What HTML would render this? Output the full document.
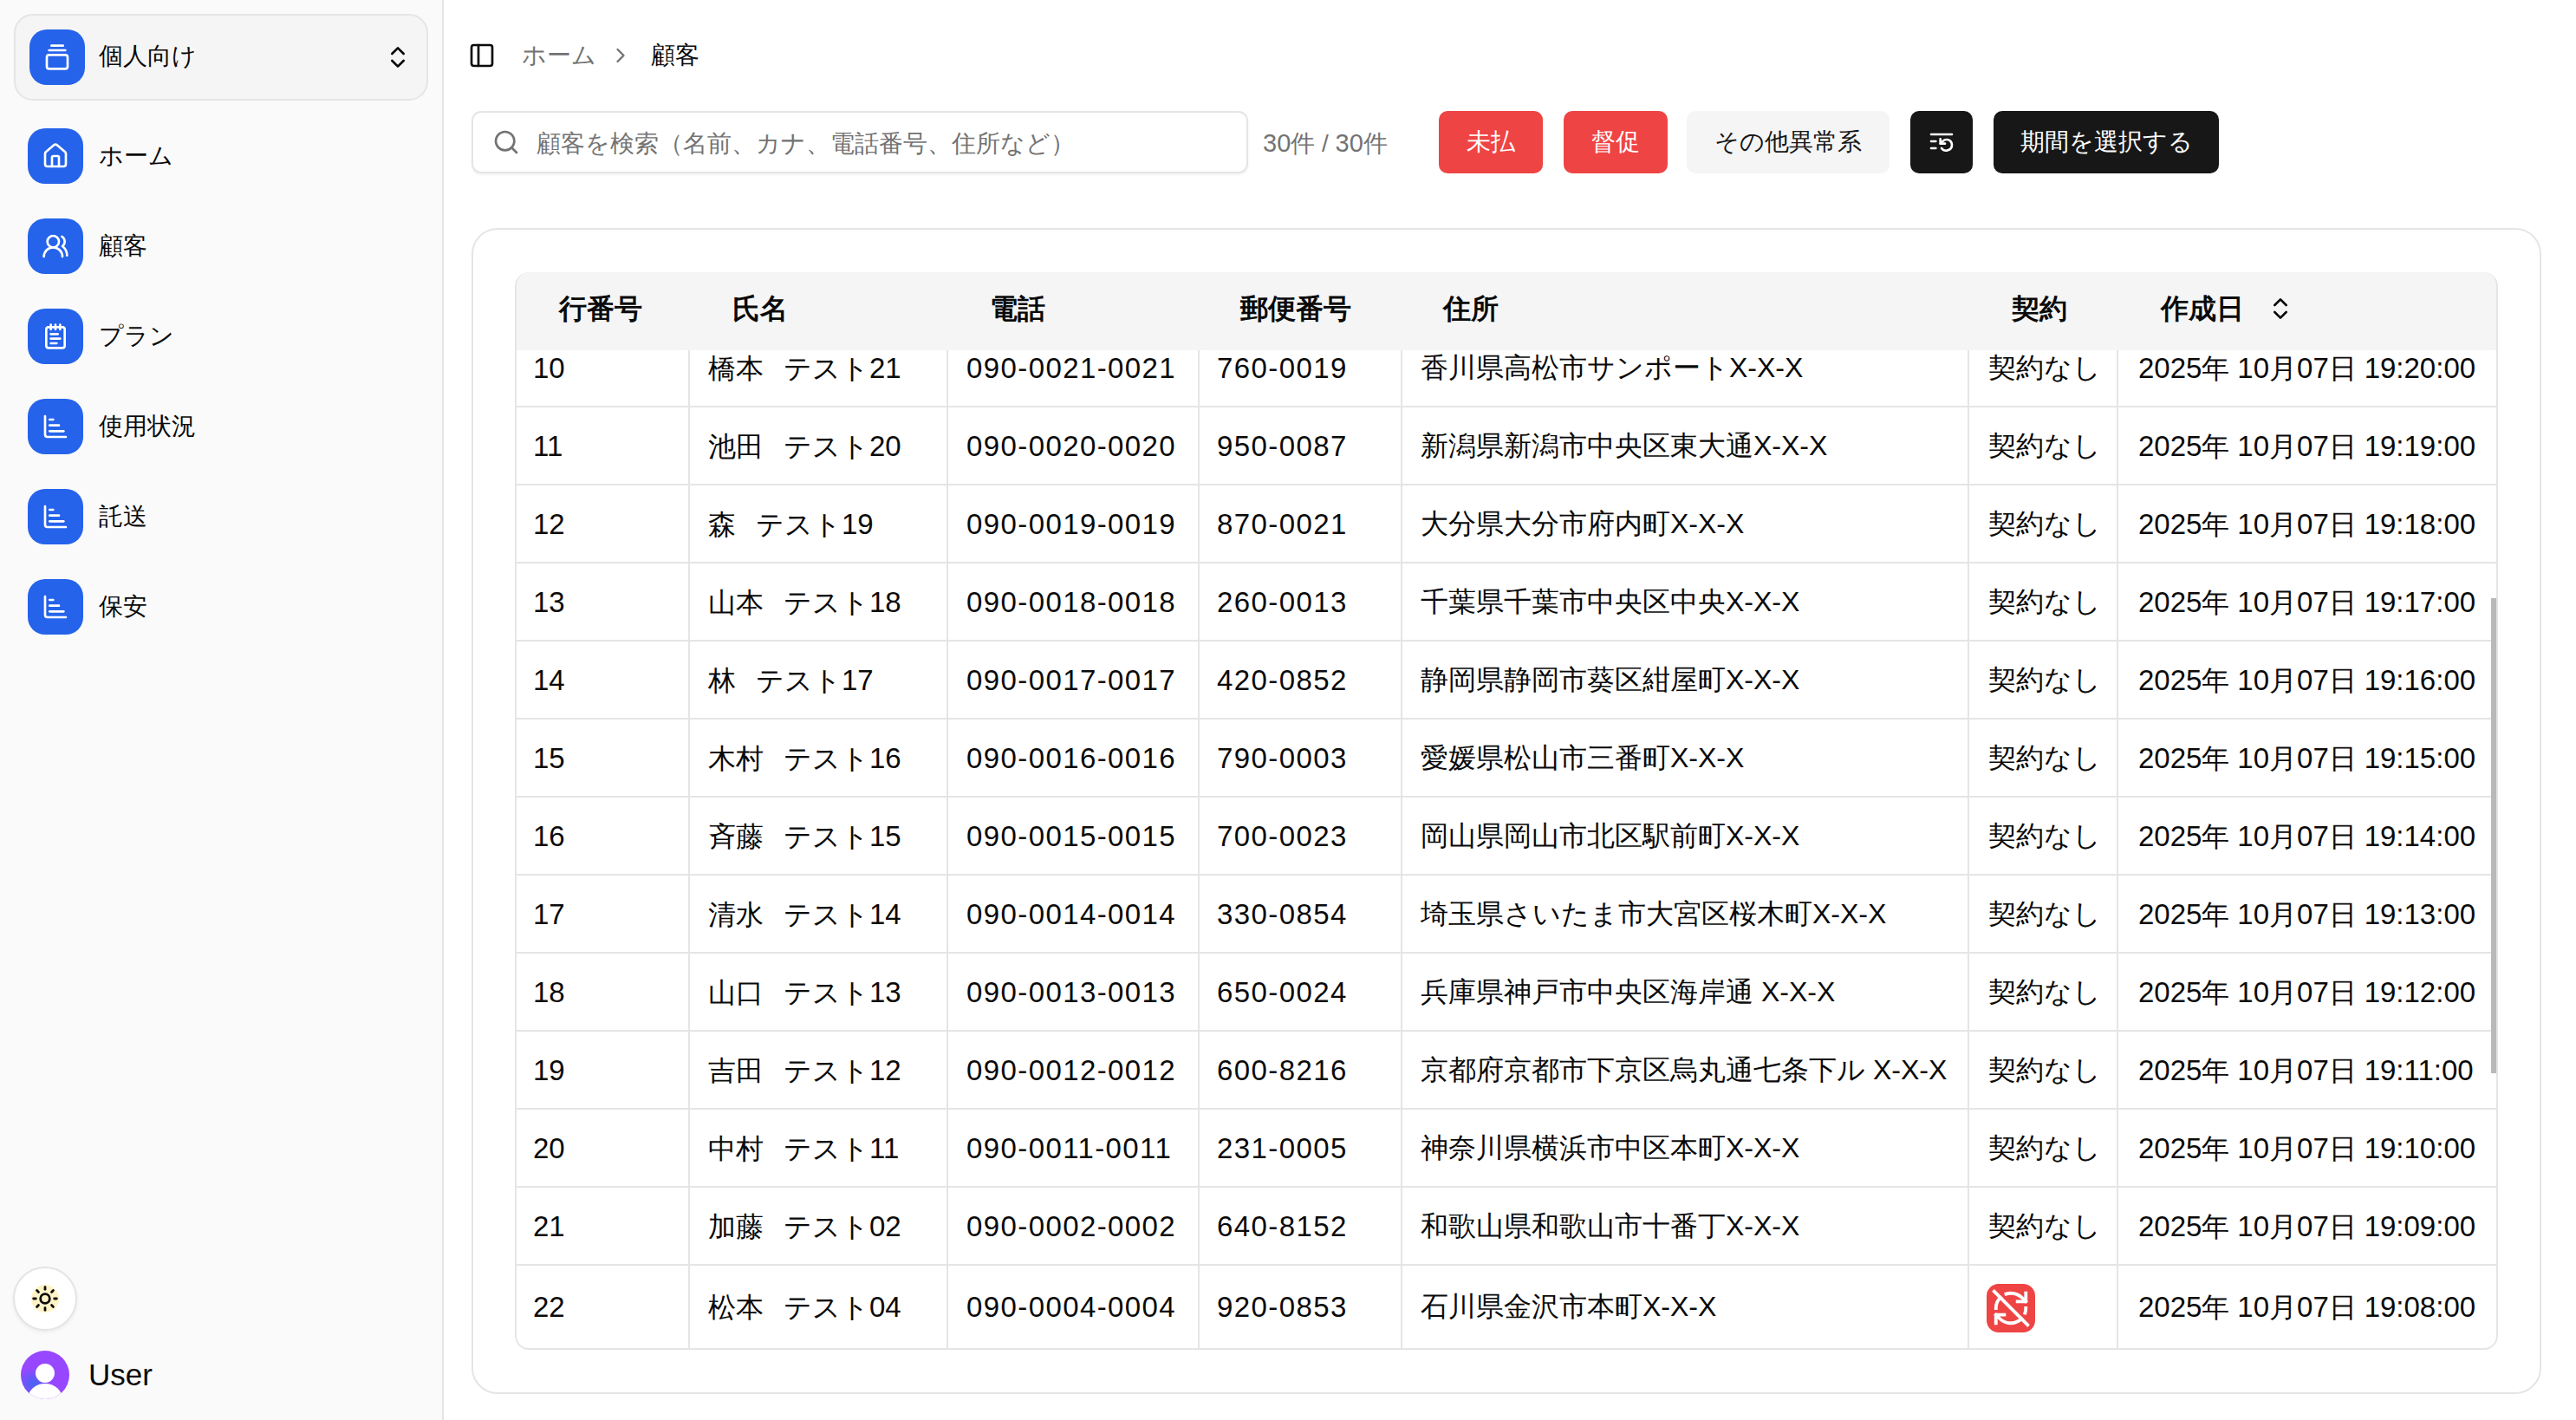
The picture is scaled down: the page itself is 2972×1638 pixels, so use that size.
<!DOCTYPE html>
<html lang="ja"><head><meta charset="utf-8"><title>顧客</title>
<style>
html,body{margin:0;padding:0;}
body{width:2972px;height:1638px;overflow:hidden;position:relative;background:#fff;font-family:"Liberation Sans",sans-serif;color:#0a0a0a;}
.a{position:absolute;}
.t{position:absolute;white-space:nowrap;line-height:1;}
svg{display:block;}
</style></head><body>

<div class="a" style="left:0;top:0;width:510px;height:1638px;background:#fafafa;border-right:2px solid #e5e5e5;"></div>
<div class="a" style="left:16px;top:16px;width:474px;height:96px;background:#f5f5f5;border:2px solid #e5e5e5;border-radius:22px;"></div>
<div class="a" style="left:34px;top:34px;width:64px;height:64px;background:#2563eb;border-radius:20px;display:flex;align-items:center;justify-content:center;"><svg width="32" height="32" viewBox="0 0 24 24" fill="none" stroke="#fff" stroke-width="2" stroke-linecap="round" stroke-linejoin="round" ><path d="M7 2h10"/><path d="M5 6h14"/><rect width="18" height="12" x="3" y="10" rx="2"/></svg></div>
<div class="t" style="left:114px;top:51px;font-size:28px;">個人向け</div>
<div class="a" style="left:443px;top:50px;"><svg width="32" height="32" viewBox="0 0 24 24" fill="none" stroke="#0a0a0a" stroke-width="2" stroke-linecap="round" stroke-linejoin="round" ><path d="m7 15 5 5 5-5"/><path d="m7 9 5-5 5 5"/></svg></div>
<div class="a" style="left:32px;top:148px;width:64px;height:64px;background:#2563eb;border-radius:20px;display:flex;align-items:center;justify-content:center;"><svg width="32" height="32" viewBox="0 0 24 24" fill="none" stroke="#fff" stroke-width="2" stroke-linecap="round" stroke-linejoin="round" ><path d="M15 21v-8a1 1 0 0 0-1-1h-4a1 1 0 0 0-1 1v8"/><path d="M3 10a2 2 0 0 1 .709-1.528l7-5.999a2 2 0 0 1 2.582 0l7 5.999A2 2 0 0 1 21 10v9a2 2 0 0 1-2 2H5a2 2 0 0 1-2-2z"/></svg></div>
<div class="t" style="left:114px;top:166px;font-size:28px;">ホーム</div>
<div class="a" style="left:32px;top:252px;width:64px;height:64px;background:#2563eb;border-radius:20px;display:flex;align-items:center;justify-content:center;"><svg width="32" height="32" viewBox="0 0 24 24" fill="none" stroke="#fff" stroke-width="2" stroke-linecap="round" stroke-linejoin="round" ><path d="M18 21a8 8 0 0 0-16 0"/><circle cx="10" cy="8" r="5"/><path d="M22 20c0-3.37-2-6.5-4-8a5 5 0 0 0-.45-8.3"/></svg></div>
<div class="t" style="left:114px;top:270px;font-size:28px;">顧客</div>
<div class="a" style="left:32px;top:356px;width:64px;height:64px;background:#2563eb;border-radius:20px;display:flex;align-items:center;justify-content:center;"><svg width="32" height="32" viewBox="0 0 24 24" fill="none" stroke="#fff" stroke-width="2" stroke-linecap="round" stroke-linejoin="round" ><path d="M8 2v4"/><path d="M12 2v4"/><path d="M16 2v4"/><rect width="16" height="18" x="4" y="4" rx="2"/><path d="M8 10h6"/><path d="M8 14h8"/><path d="M8 18h5"/></svg></div>
<div class="t" style="left:114px;top:374px;font-size:28px;">プラン</div>
<div class="a" style="left:32px;top:460px;width:64px;height:64px;background:#2563eb;border-radius:20px;display:flex;align-items:center;justify-content:center;"><svg width="32" height="32" viewBox="0 0 24 24" fill="none" stroke="#fff" stroke-width="2" stroke-linecap="round" stroke-linejoin="round" ><path d="M3 3v16a2 2 0 0 0 2 2h16"/><path d="M7 11h8"/><path d="M7 16h12"/><path d="M7 6h3"/></svg></div>
<div class="t" style="left:114px;top:478px;font-size:28px;">使用状況</div>
<div class="a" style="left:32px;top:564px;width:64px;height:64px;background:#2563eb;border-radius:20px;display:flex;align-items:center;justify-content:center;"><svg width="32" height="32" viewBox="0 0 24 24" fill="none" stroke="#fff" stroke-width="2" stroke-linecap="round" stroke-linejoin="round" ><path d="M3 3v16a2 2 0 0 0 2 2h16"/><path d="M7 11h8"/><path d="M7 16h12"/><path d="M7 6h3"/></svg></div>
<div class="t" style="left:114px;top:582px;font-size:28px;">託送</div>
<div class="a" style="left:32px;top:668px;width:64px;height:64px;background:#2563eb;border-radius:20px;display:flex;align-items:center;justify-content:center;"><svg width="32" height="32" viewBox="0 0 24 24" fill="none" stroke="#fff" stroke-width="2" stroke-linecap="round" stroke-linejoin="round" ><path d="M3 3v16a2 2 0 0 0 2 2h16"/><path d="M7 11h8"/><path d="M7 16h12"/><path d="M7 6h3"/></svg></div>
<div class="t" style="left:114px;top:686px;font-size:28px;">保安</div>
<div class="a" style="left:15px;top:1461px;width:70px;height:70px;border:2px solid #e5e5e5;border-radius:50%;background:#fff;box-shadow:0 2px 4px rgba(0,0,0,0.06);"></div>
<div class="a" style="left:36px;top:1482px;width:32px;height:32px;border-radius:50%;background:#fef3c7;"></div>
<div class="a" style="left:36px;top:1482px;"><svg width="32" height="32" viewBox="0 0 24 24" fill="none" stroke="#0a0a0a" stroke-width="2.1" stroke-linecap="round" stroke-linejoin="round" ><circle cx="12" cy="12" r="4"/><path d="M12 2v2"/><path d="M12 20v2"/><path d="m4.93 4.93 1.41 1.41"/><path d="m17.66 17.66 1.41 1.41"/><path d="M2 12h2"/><path d="M20 12h2"/><path d="m6.34 17.66-1.41 1.41"/><path d="m19.07 4.93-1.41 1.41"/></svg></div>
<div class="a" style="left:24px;top:1558px;width:56px;height:56px;border-radius:50%;overflow:hidden;background:#9747ff;">
<div class="a" style="left:0;top:20px;width:36px;height:36px;background:radial-gradient(circle at 40% 50%, rgba(40,110,240,0.75) 0%, rgba(40,110,240,0) 65%);"></div>
<div class="a" style="left:17px;top:15px;width:22px;height:22px;border-radius:50%;background:#fff;"></div>
<div class="a" style="left:8px;top:38px;width:40px;height:36px;border-radius:50%;background:#fff;"></div>
</div>
<div class="t" style="left:102px;top:1568px;font-size:35px;">User</div>
<div class="a" style="left:540px;top:48px;"><svg width="32" height="32" viewBox="0 0 24 24" fill="none" stroke="#0a0a0a" stroke-width="2" stroke-linecap="round" stroke-linejoin="round" ><rect width="18" height="18" x="3" y="3" rx="2"/><path d="M9 3v18"/></svg></div>
<div class="t" style="left:602px;top:50px;font-size:28px;color:#737373;">ホーム</div>
<div class="a" style="left:702px;top:50px;"><svg width="28" height="28" viewBox="0 0 24 24" fill="none" stroke="#737373" stroke-width="2" stroke-linecap="round" stroke-linejoin="round" ><path d="m9 18 6-6-6-6"/></svg></div>
<div class="t" style="left:751px;top:50px;font-size:28px;">顧客</div>
<div class="a" style="left:544px;top:128px;width:892px;height:68px;border:2px solid #e5e5e5;border-radius:11px;background:#fff;box-shadow:0 2px 3px rgba(0,0,0,0.05);"></div>
<div class="a" style="left:568px;top:148px;"><svg width="32" height="32" viewBox="0 0 24 24" fill="none" stroke="#737373" stroke-width="2" stroke-linecap="round" stroke-linejoin="round" ><circle cx="11" cy="11" r="8"/><path d="m21 21-4.3-4.3"/></svg></div>
<div class="t" style="left:619px;top:152px;font-size:28px;color:#737373;">顧客を検索（名前、カナ、電話番号、住所など）</div>
<div class="t" style="left:1457px;top:151px;font-size:28px;color:#737373;"><span style="font-size:29px">30</span>件 / <span style="font-size:29px">30</span>件</div>
<div class="a" style="left:1660px;top:128px;width:120px;height:72px;background:#ef4444;border-radius:10px;"></div>
<div class="t" style="left:1660px;top:150px;width:120px;text-align:center;font-size:28px;color:#fff;">未払</div>
<div class="a" style="left:1804px;top:128px;width:120px;height:72px;background:#ef4444;border-radius:10px;"></div>
<div class="t" style="left:1804px;top:150px;width:120px;text-align:center;font-size:28px;color:#fff;">督促</div>
<div class="a" style="left:1946px;top:128px;width:234px;height:72px;background:#f5f5f5;border-radius:10px;"></div>
<div class="t" style="left:1946px;top:150px;width:234px;text-align:center;font-size:28px;color:#171717;">その他異常系</div>
<div class="a" style="left:2204px;top:128px;width:72px;height:72px;background:#171717;border-radius:10px;"></div>
<div class="a" style="left:2224px;top:147px;"><svg width="32" height="32" viewBox="0 0 24 24" fill="none" stroke="#fff" stroke-width="2" stroke-linecap="round" stroke-linejoin="round" ><path d="M21 6H3"/><path d="M7 12H3"/><path d="M7 18H3"/><path d="M12 18a5 5 0 0 0 9-3 4.5 4.5 0 0 0-4.5-4.5c-1.33 0-2.54.54-3.41 1.41L11 14"/><path d="M11 10v4h4"/></svg></div>
<div class="a" style="left:2300px;top:128px;width:260px;height:72px;background:#171717;border-radius:10px;"></div>
<div class="t" style="left:2300px;top:150px;width:260px;text-align:center;font-size:28px;color:#fff;">期間を選択する</div>
<div class="a" style="left:544px;top:263px;width:2384px;height:1341px;border:2px solid #e5e5e5;border-radius:30px;background:#fff;"></div>
<div class="a" style="left:594px;top:314px;width:2288px;height:1243px;border-radius:16px;overflow:hidden;">
<div class="a" style="left:0;top:154px;width:2288px;height:2px;background:#e5e5e5;"></div>
<div class="t" style="left:21px;top:94px;font-size:32px;"><span style="font-size:33px">10</span></div>
<div class="t" style="left:223px;top:94px;font-size:32px;">橋本<span style="letter-spacing:-9px">　</span>テスト<span style="font-size:33px">21</span></div>
<div class="t" style="left:521px;top:94px;font-size:32px;"><span style="font-size:33px;letter-spacing:1.4px">090-0021-0021</span></div>
<div class="t" style="left:810px;top:94px;font-size:32px;"><span style="font-size:33px;letter-spacing:1.4px">760-0019</span></div>
<div class="t" style="left:1045px;top:94px;font-size:32px;">香川県高松市サンポートX-X-X</div>
<div class="t" style="left:1700px;top:94px;font-size:32px;">契約なし</div>
<div class="t" style="left:1873px;top:94px;font-size:32px;"><span style="font-size:33px">2025</span>年 <span style="font-size:33px">10</span>月<span style="font-size:33px">07</span>日 <span style="font-size:33px">19:20:00</span></div>
<div class="a" style="left:0;top:244px;width:2288px;height:2px;background:#e5e5e5;"></div>
<div class="t" style="left:21px;top:184px;font-size:32px;"><span style="font-size:33px">11</span></div>
<div class="t" style="left:223px;top:184px;font-size:32px;">池田<span style="letter-spacing:-9px">　</span>テスト<span style="font-size:33px">20</span></div>
<div class="t" style="left:521px;top:184px;font-size:32px;"><span style="font-size:33px;letter-spacing:1.4px">090-0020-0020</span></div>
<div class="t" style="left:810px;top:184px;font-size:32px;"><span style="font-size:33px;letter-spacing:1.4px">950-0087</span></div>
<div class="t" style="left:1045px;top:184px;font-size:32px;">新潟県新潟市中央区東大通X-X-X</div>
<div class="t" style="left:1700px;top:184px;font-size:32px;">契約なし</div>
<div class="t" style="left:1873px;top:184px;font-size:32px;"><span style="font-size:33px">2025</span>年 <span style="font-size:33px">10</span>月<span style="font-size:33px">07</span>日 <span style="font-size:33px">19:19:00</span></div>
<div class="a" style="left:0;top:334px;width:2288px;height:2px;background:#e5e5e5;"></div>
<div class="t" style="left:21px;top:274px;font-size:32px;"><span style="font-size:33px">12</span></div>
<div class="t" style="left:223px;top:274px;font-size:32px;">森<span style="letter-spacing:-9px">　</span>テスト<span style="font-size:33px">19</span></div>
<div class="t" style="left:521px;top:274px;font-size:32px;"><span style="font-size:33px;letter-spacing:1.4px">090-0019-0019</span></div>
<div class="t" style="left:810px;top:274px;font-size:32px;"><span style="font-size:33px;letter-spacing:1.4px">870-0021</span></div>
<div class="t" style="left:1045px;top:274px;font-size:32px;">大分県大分市府内町X-X-X</div>
<div class="t" style="left:1700px;top:274px;font-size:32px;">契約なし</div>
<div class="t" style="left:1873px;top:274px;font-size:32px;"><span style="font-size:33px">2025</span>年 <span style="font-size:33px">10</span>月<span style="font-size:33px">07</span>日 <span style="font-size:33px">19:18:00</span></div>
<div class="a" style="left:0;top:424px;width:2288px;height:2px;background:#e5e5e5;"></div>
<div class="t" style="left:21px;top:364px;font-size:32px;"><span style="font-size:33px">13</span></div>
<div class="t" style="left:223px;top:364px;font-size:32px;">山本<span style="letter-spacing:-9px">　</span>テスト<span style="font-size:33px">18</span></div>
<div class="t" style="left:521px;top:364px;font-size:32px;"><span style="font-size:33px;letter-spacing:1.4px">090-0018-0018</span></div>
<div class="t" style="left:810px;top:364px;font-size:32px;"><span style="font-size:33px;letter-spacing:1.4px">260-0013</span></div>
<div class="t" style="left:1045px;top:364px;font-size:32px;">千葉県千葉市中央区中央X-X-X</div>
<div class="t" style="left:1700px;top:364px;font-size:32px;">契約なし</div>
<div class="t" style="left:1873px;top:364px;font-size:32px;"><span style="font-size:33px">2025</span>年 <span style="font-size:33px">10</span>月<span style="font-size:33px">07</span>日 <span style="font-size:33px">19:17:00</span></div>
<div class="a" style="left:0;top:514px;width:2288px;height:2px;background:#e5e5e5;"></div>
<div class="t" style="left:21px;top:454px;font-size:32px;"><span style="font-size:33px">14</span></div>
<div class="t" style="left:223px;top:454px;font-size:32px;">林<span style="letter-spacing:-9px">　</span>テスト<span style="font-size:33px">17</span></div>
<div class="t" style="left:521px;top:454px;font-size:32px;"><span style="font-size:33px;letter-spacing:1.4px">090-0017-0017</span></div>
<div class="t" style="left:810px;top:454px;font-size:32px;"><span style="font-size:33px;letter-spacing:1.4px">420-0852</span></div>
<div class="t" style="left:1045px;top:454px;font-size:32px;">静岡県静岡市葵区紺屋町X-X-X</div>
<div class="t" style="left:1700px;top:454px;font-size:32px;">契約なし</div>
<div class="t" style="left:1873px;top:454px;font-size:32px;"><span style="font-size:33px">2025</span>年 <span style="font-size:33px">10</span>月<span style="font-size:33px">07</span>日 <span style="font-size:33px">19:16:00</span></div>
<div class="a" style="left:0;top:604px;width:2288px;height:2px;background:#e5e5e5;"></div>
<div class="t" style="left:21px;top:544px;font-size:32px;"><span style="font-size:33px">15</span></div>
<div class="t" style="left:223px;top:544px;font-size:32px;">木村<span style="letter-spacing:-9px">　</span>テスト<span style="font-size:33px">16</span></div>
<div class="t" style="left:521px;top:544px;font-size:32px;"><span style="font-size:33px;letter-spacing:1.4px">090-0016-0016</span></div>
<div class="t" style="left:810px;top:544px;font-size:32px;"><span style="font-size:33px;letter-spacing:1.4px">790-0003</span></div>
<div class="t" style="left:1045px;top:544px;font-size:32px;">愛媛県松山市三番町X-X-X</div>
<div class="t" style="left:1700px;top:544px;font-size:32px;">契約なし</div>
<div class="t" style="left:1873px;top:544px;font-size:32px;"><span style="font-size:33px">2025</span>年 <span style="font-size:33px">10</span>月<span style="font-size:33px">07</span>日 <span style="font-size:33px">19:15:00</span></div>
<div class="a" style="left:0;top:694px;width:2288px;height:2px;background:#e5e5e5;"></div>
<div class="t" style="left:21px;top:634px;font-size:32px;"><span style="font-size:33px">16</span></div>
<div class="t" style="left:223px;top:634px;font-size:32px;">斉藤<span style="letter-spacing:-9px">　</span>テスト<span style="font-size:33px">15</span></div>
<div class="t" style="left:521px;top:634px;font-size:32px;"><span style="font-size:33px;letter-spacing:1.4px">090-0015-0015</span></div>
<div class="t" style="left:810px;top:634px;font-size:32px;"><span style="font-size:33px;letter-spacing:1.4px">700-0023</span></div>
<div class="t" style="left:1045px;top:634px;font-size:32px;">岡山県岡山市北区駅前町X-X-X</div>
<div class="t" style="left:1700px;top:634px;font-size:32px;">契約なし</div>
<div class="t" style="left:1873px;top:634px;font-size:32px;"><span style="font-size:33px">2025</span>年 <span style="font-size:33px">10</span>月<span style="font-size:33px">07</span>日 <span style="font-size:33px">19:14:00</span></div>
<div class="a" style="left:0;top:784px;width:2288px;height:2px;background:#e5e5e5;"></div>
<div class="t" style="left:21px;top:724px;font-size:32px;"><span style="font-size:33px">17</span></div>
<div class="t" style="left:223px;top:724px;font-size:32px;">清水<span style="letter-spacing:-9px">　</span>テスト<span style="font-size:33px">14</span></div>
<div class="t" style="left:521px;top:724px;font-size:32px;"><span style="font-size:33px;letter-spacing:1.4px">090-0014-0014</span></div>
<div class="t" style="left:810px;top:724px;font-size:32px;"><span style="font-size:33px;letter-spacing:1.4px">330-0854</span></div>
<div class="t" style="left:1045px;top:724px;font-size:32px;">埼玉県さいたま市大宮区桜木町X-X-X</div>
<div class="t" style="left:1700px;top:724px;font-size:32px;">契約なし</div>
<div class="t" style="left:1873px;top:724px;font-size:32px;"><span style="font-size:33px">2025</span>年 <span style="font-size:33px">10</span>月<span style="font-size:33px">07</span>日 <span style="font-size:33px">19:13:00</span></div>
<div class="a" style="left:0;top:874px;width:2288px;height:2px;background:#e5e5e5;"></div>
<div class="t" style="left:21px;top:814px;font-size:32px;"><span style="font-size:33px">18</span></div>
<div class="t" style="left:223px;top:814px;font-size:32px;">山口<span style="letter-spacing:-9px">　</span>テスト<span style="font-size:33px">13</span></div>
<div class="t" style="left:521px;top:814px;font-size:32px;"><span style="font-size:33px;letter-spacing:1.4px">090-0013-0013</span></div>
<div class="t" style="left:810px;top:814px;font-size:32px;"><span style="font-size:33px;letter-spacing:1.4px">650-0024</span></div>
<div class="t" style="left:1045px;top:814px;font-size:32px;">兵庫県神戸市中央区海岸通 X-X-X</div>
<div class="t" style="left:1700px;top:814px;font-size:32px;">契約なし</div>
<div class="t" style="left:1873px;top:814px;font-size:32px;"><span style="font-size:33px">2025</span>年 <span style="font-size:33px">10</span>月<span style="font-size:33px">07</span>日 <span style="font-size:33px">19:12:00</span></div>
<div class="a" style="left:0;top:964px;width:2288px;height:2px;background:#e5e5e5;"></div>
<div class="t" style="left:21px;top:904px;font-size:32px;"><span style="font-size:33px">19</span></div>
<div class="t" style="left:223px;top:904px;font-size:32px;">吉田<span style="letter-spacing:-9px">　</span>テスト<span style="font-size:33px">12</span></div>
<div class="t" style="left:521px;top:904px;font-size:32px;"><span style="font-size:33px;letter-spacing:1.4px">090-0012-0012</span></div>
<div class="t" style="left:810px;top:904px;font-size:32px;"><span style="font-size:33px;letter-spacing:1.4px">600-8216</span></div>
<div class="t" style="left:1045px;top:904px;font-size:32px;">京都府京都市下京区烏丸通七条下ル X-X-X</div>
<div class="t" style="left:1700px;top:904px;font-size:32px;">契約なし</div>
<div class="t" style="left:1873px;top:904px;font-size:32px;"><span style="font-size:33px">2025</span>年 <span style="font-size:33px">10</span>月<span style="font-size:33px">07</span>日 <span style="font-size:33px">19:11:00</span></div>
<div class="a" style="left:0;top:1054px;width:2288px;height:2px;background:#e5e5e5;"></div>
<div class="t" style="left:21px;top:994px;font-size:32px;"><span style="font-size:33px">20</span></div>
<div class="t" style="left:223px;top:994px;font-size:32px;">中村<span style="letter-spacing:-9px">　</span>テスト<span style="font-size:33px">11</span></div>
<div class="t" style="left:521px;top:994px;font-size:32px;"><span style="font-size:33px;letter-spacing:1.4px">090-0011-0011</span></div>
<div class="t" style="left:810px;top:994px;font-size:32px;"><span style="font-size:33px;letter-spacing:1.4px">231-0005</span></div>
<div class="t" style="left:1045px;top:994px;font-size:32px;">神奈川県横浜市中区本町X-X-X</div>
<div class="t" style="left:1700px;top:994px;font-size:32px;">契約なし</div>
<div class="t" style="left:1873px;top:994px;font-size:32px;"><span style="font-size:33px">2025</span>年 <span style="font-size:33px">10</span>月<span style="font-size:33px">07</span>日 <span style="font-size:33px">19:10:00</span></div>
<div class="a" style="left:0;top:1144px;width:2288px;height:2px;background:#e5e5e5;"></div>
<div class="t" style="left:21px;top:1084px;font-size:32px;"><span style="font-size:33px">21</span></div>
<div class="t" style="left:223px;top:1084px;font-size:32px;">加藤<span style="letter-spacing:-9px">　</span>テスト<span style="font-size:33px">02</span></div>
<div class="t" style="left:521px;top:1084px;font-size:32px;"><span style="font-size:33px;letter-spacing:1.4px">090-0002-0002</span></div>
<div class="t" style="left:810px;top:1084px;font-size:32px;"><span style="font-size:33px;letter-spacing:1.4px">640-8152</span></div>
<div class="t" style="left:1045px;top:1084px;font-size:32px;">和歌山県和歌山市十番丁X-X-X</div>
<div class="t" style="left:1700px;top:1084px;font-size:32px;">契約なし</div>
<div class="t" style="left:1873px;top:1084px;font-size:32px;"><span style="font-size:33px">2025</span>年 <span style="font-size:33px">10</span>月<span style="font-size:33px">07</span>日 <span style="font-size:33px">19:09:00</span></div>
<div class="a" style="left:0;top:1241px;width:2288px;height:2px;background:#e5e5e5;"></div>
<div class="t" style="left:21px;top:1177px;font-size:32px;"><span style="font-size:33px">22</span></div>
<div class="t" style="left:223px;top:1177px;font-size:32px;">松本<span style="letter-spacing:-9px">　</span>テスト<span style="font-size:33px">04</span></div>
<div class="t" style="left:521px;top:1177px;font-size:32px;"><span style="font-size:33px;letter-spacing:1.4px">090-0004-0004</span></div>
<div class="t" style="left:810px;top:1177px;font-size:32px;"><span style="font-size:33px;letter-spacing:1.4px">920-0853</span></div>
<div class="t" style="left:1045px;top:1177px;font-size:32px;">石川県金沢市本町X-X-X</div>
<div class="a" style="left:1698px;top:1167px;width:56px;height:56px;background:#ef4444;border-radius:14px;display:flex;align-items:center;justify-content:center;"><svg width="46" height="46" viewBox="0 0 24 24" fill="none" stroke="#fff" stroke-width="2"  stroke-linejoin="round" stroke-linecap="square"><path d="M21 8L18.74 5.74A9.75 9.75 0 0 0 12 3C11 3 10.03 3.16 9.13 3.47"/><path d="M8 16H3v5"/><path d="M3 12C3 9.51 4 7.26 5.64 5.64"/><path d="m3 16 2.26 2.26A9.75 9.75 0 0 0 12 21c2.49 0 4.74-1 6.36-2.64"/><path d="M21 12c0 1-.16 1.97-.47 2.87"/><path d="M21 3v5h-5"/><path d="M22 22 2 2"/></svg></div>
<div class="t" style="left:1873px;top:1177px;font-size:32px;"><span style="font-size:33px">2025</span>年 <span style="font-size:33px">10</span>月<span style="font-size:33px">07</span>日 <span style="font-size:33px">19:08:00</span></div>
<div class="a" style="left:200px;top:90px;width:2px;height:1243px;background:#e5e5e5;"></div>
<div class="a" style="left:498px;top:90px;width:2px;height:1243px;background:#e5e5e5;"></div>
<div class="a" style="left:788px;top:90px;width:2px;height:1243px;background:#e5e5e5;"></div>
<div class="a" style="left:1022px;top:90px;width:2px;height:1243px;background:#e5e5e5;"></div>
<div class="a" style="left:1676px;top:90px;width:2px;height:1243px;background:#e5e5e5;"></div>
<div class="a" style="left:1848px;top:90px;width:2px;height:1243px;background:#e5e5e5;"></div>
<div class="a" style="left:0;top:0;width:2288px;height:90px;background:#f5f5f5;"></div>
<div class="t" style="left:51px;top:26px;font-size:32px;font-weight:bold;">行番号</div>
<div class="t" style="left:251px;top:26px;font-size:32px;font-weight:bold;">氏名</div>
<div class="t" style="left:548px;top:26px;font-size:32px;font-weight:bold;">電話</div>
<div class="t" style="left:837px;top:26px;font-size:32px;font-weight:bold;">郵便番号</div>
<div class="t" style="left:1071px;top:26px;font-size:32px;font-weight:bold;">住所</div>
<div class="t" style="left:1727px;top:26px;font-size:32px;font-weight:bold;">契約</div>
<div class="t" style="left:1899px;top:26px;font-size:32px;font-weight:bold;">作成日</div>
<div class="a" style="left:2021px;top:26px;"><svg width="32" height="32" viewBox="0 0 24 24" fill="none" stroke="#0a0a0a" stroke-width="2" stroke-linecap="round" stroke-linejoin="round" ><path d="m7 15 5 5 5-5"/><path d="m7 9 5-5 5 5"/></svg></div>
<div class="a" style="left:2280px;top:376px;width:8px;height:548px;background:#b9b9b9;"></div>
<div class="a" style="left:0;top:0;width:2284px;height:1241px;border:2px solid #e5e5e5;border-top:none;border-radius:16px;"></div>
</div>
</body></html>
